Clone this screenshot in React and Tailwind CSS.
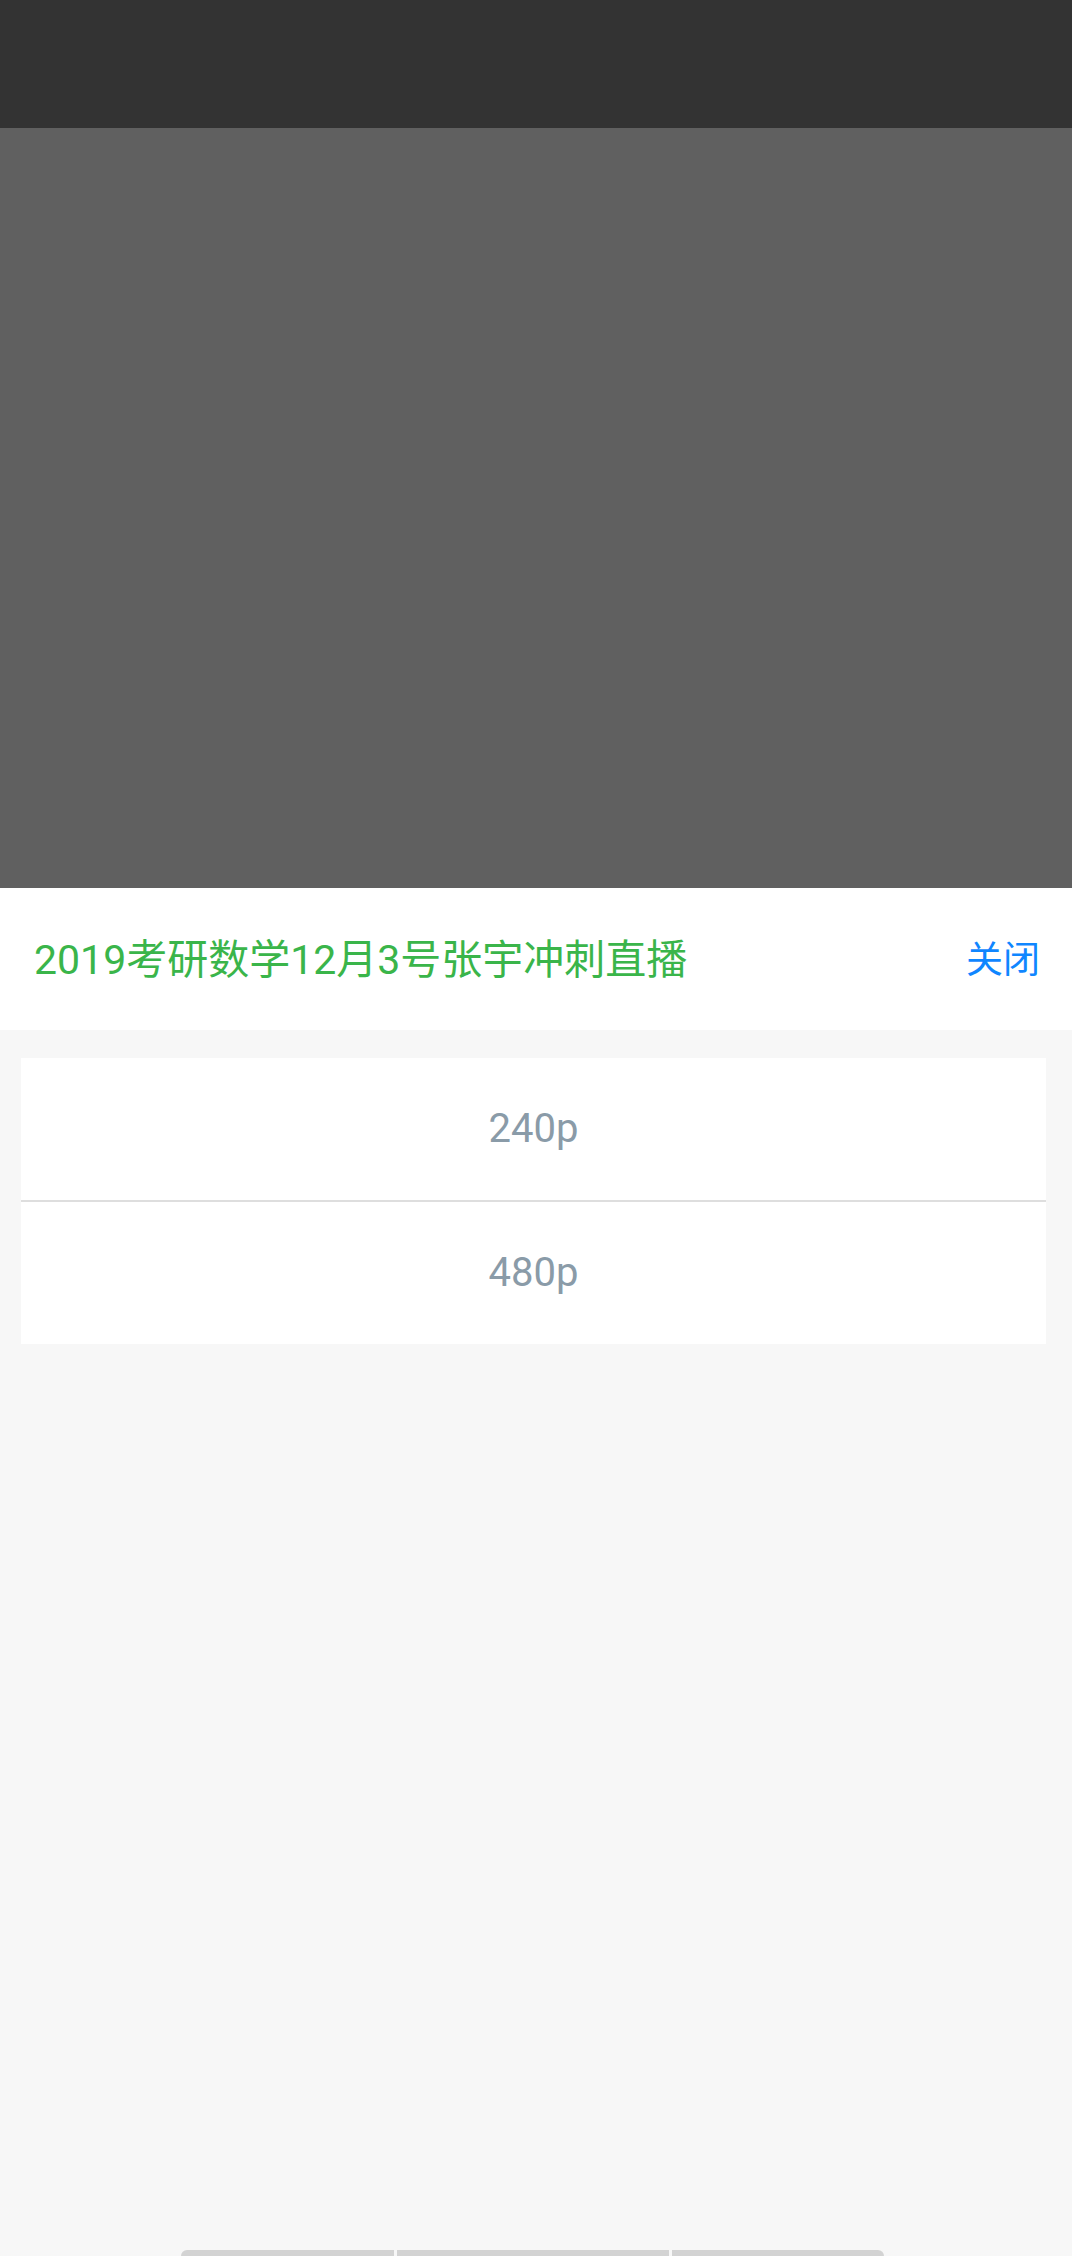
import React from 'react';

const qualities = ['240p', '480p'];

const font = { fontFamily: 'Roboto, "Noto Sans CJK SC", sans-serif' };

export default function App() {
  return (
    <div className="flex min-h-[2256px] w-[1072px] flex-col bg-[#f7f7f7]" style={font}>
      <div className="h-[128px] bg-[#333333]" />
      <div className="h-[760px] bg-[#606060]" />

      <div className="flex h-[142px] items-center justify-between bg-white pl-[34px] pr-[32px]">
        <span className="pt-[3px] text-[41px] leading-none text-[#3ab54a]">2019考研数学12月3号张宇冲刺直播</span>
        <button className="pt-[3px] text-[37px] leading-none text-[#0f86ff]">关闭</button>
      </div>

      <div className="flex-1 pt-[28px] pl-[21px] pr-[26px]">
        <div className="bg-white">
          {qualities.map((q, i) => (
            <div key={q}>
              {i > 0 && <div className="h-[2px] bg-[#dedede]" />}
              <div className="flex h-[142px] items-center justify-center text-[40px] text-[#8a9ba8]">
                {q}
              </div>
            </div>
          ))}
        </div>
      </div>

      <div className="flex h-[6px] gap-[3px] pl-[181px]">
        <div className="h-[12px] w-[213px] rounded-l-[6px] bg-[#d3d3d3]" />
        <div className="h-[12px] w-[272px] bg-[#d3d3d3]" />
        <div className="h-[12px] w-[212px] rounded-r-[6px] bg-[#d3d3d3]" />
      </div>
    </div>
  );
}
